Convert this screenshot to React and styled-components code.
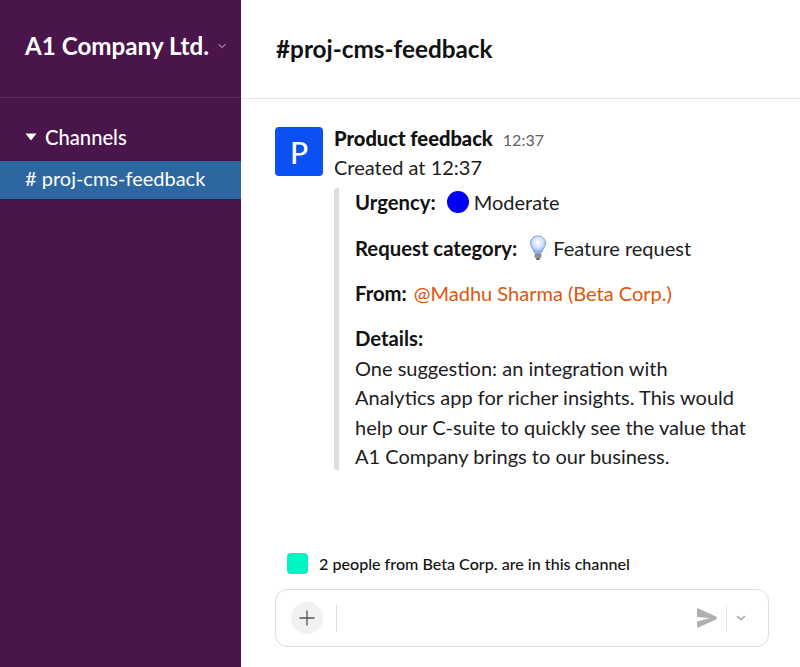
import styled, { createGlobalStyle } from 'styled-components';

const GlobalStyle = createGlobalStyle`
  html, body {
    margin: 0;
    padding: 0;
    height: 100%;
    background: #fff;
  }
  #root {
    height: 100%;
  }
`;

const App = () => {
  return (
    <>
      <GlobalStyle />
      <Root>
        <Sidebar>
          <Workspace>
            <WorkspaceName>A1 Company Ltd.</WorkspaceName>
            <svg width="10" height="6" viewBox="0 0 10 6" fill="none">
              <path d="M1.5 1.2 5 4.4l3.5-3.2" stroke="#9a7f9b" strokeWidth="1.3" />
            </svg>
          </Workspace>
          <SectionTitle>
            <svg width="12" height="8" viewBox="0 0 12 8">
              <path d="M0.5 0.5h11L6 7.5z" fill="#fff" />
            </svg>
            Channels
          </SectionTitle>
          <ChannelRow># proj-cms-feedback</ChannelRow>
        </Sidebar>
        <Main>
          <Header>#proj-cms-feedback</Header>
          <Feed>
            <Message>
              <Avatar>P</Avatar>
              <Body>
                <MessageHead>
                  <Sender>Product feedback</Sender>
                  <Time>12:37</Time>
                </MessageHead>
                <Line>Created at 12:37</Line>
                <Attachment>
                  <Field>
                    <Label>Urgency:</Label>
                    <BlueDot />
                    Moderate
                  </Field>
                  <Field>
                    <Label>Request category:</Label>
                    <svg width="20" height="26" viewBox="0 0 20 26">
                      <defs>
                        <radialGradient id="bulb" cx="50%" cy="40%" r="60%">
                          <stop offset="0" stopColor="#ffffff" />
                          <stop offset="0.6" stopColor="#cfe0ff" />
                          <stop offset="1" stopColor="#7fa6f2" />
                        </radialGradient>
                      </defs>
                      <path
                        d="M10 1C5.4 1 2.5 4.3 2.5 8.2c0 3.4 2.6 5.2 3.6 9h7.8c1-3.8 3.6-5.6 3.6-9C17.5 4.3 14.6 1 10 1z"
                        fill="url(#bulb)"
                        stroke="#7d9fe6"
                        strokeWidth="1"
                      />
                      <rect x="6.5" y="18" width="7" height="5" rx="1.5" fill="#8a8f99" />
                      <rect x="8" y="23" width="4" height="2" rx="1" fill="#5e636c" />
                    </svg>
                    Feature request
                  </Field>
                  <Field>
                    <Label>From:</Label>
                    <Mention>@Madhu Sharma (Beta Corp.)</Mention>
                  </Field>
                  <Details>
                    <Label>Details:</Label>
                    <br />
                    One suggestion: an integration with
                    <br />
                    Analytics app for richer insights. This would
                    <br />
                    help our C-suite to quickly see the value that
                    <br />
                    A1 Company brings to our business.
                  </Details>
                </Attachment>
              </Body>
            </Message>
          </Feed>
          <Notice>
            <NoticeSwatch />
            2 people from Beta Corp. are in this channel
          </Notice>
          <Composer>
            <PlusButton>
              <svg width="16" height="16" viewBox="0 0 16 16">
                <path d="M8 0.5v15M0.5 8h15" stroke="#555" strokeWidth="1.3" />
              </svg>
            </PlusButton>
            <Divider />
            <ComposerSpace />
            <svg width="20" height="20" viewBox="0 0 20 20">
              <path
                d="M1.5 0.4 19 8.6c1.3.6 1.3 2.2 0 2.800L1.5 19.600C.7 20 0 19.400 0 18.600v-5.100L13 10 0 9V1.400C0 .6.7 0 1.500.4z"
                fill="#b0b0b0"
              />
            </svg>
            <SendDivider />
            <svg width="10" height="6" viewBox="0 0 10 6" fill="none">
              <path d="M1 1l4 3.6L9 1" stroke="#a0a0a0" strokeWidth="1.4" />
            </svg>
          </Composer>
        </Main>
      </Root>
    </>
  );
};

export default App;

const Root = styled.div`
  width: 800px;
  height: 667px;
  display: flex;
  overflow: hidden;
  font-family: Lato, 'Liberation Sans', sans-serif;
  color: #1d1c1d;
`;

const Sidebar = styled.aside`
  width: 241px;
  flex-shrink: 0;
  background: #4a154b;
  color: #fff;
`;

const Workspace = styled.div`
  height: 98px;
  box-sizing: border-box;
  border-bottom: 1px solid #5a2e5b;
  padding: 0 14px 6px 25px;
  display: flex;
  align-items: center;
  gap: 8px;
`;

const WorkspaceName = styled.div`
  font-size: 24.2px;
  font-weight: 700;
  white-space: nowrap;
`;

const SectionTitle = styled.div`
  height: 24px;
  margin-top: 27px;
  padding-left: 25px;
  display: flex;
  align-items: center;
  gap: 8px;
  font-size: 20.2px;
  font-weight: 500;
`;

const ChannelRow = styled.div`
  height: 38px;
  box-sizing: border-box;
  margin-top: 12px;
  padding: 0 0 4px 25px;
  display: flex;
  align-items: center;
  background: #2c67a1;
  font-size: 20px;
  white-space: nowrap;
`;

const Main = styled.main`
  flex: 1;
  min-width: 0;
  display: flex;
  flex-direction: column;
`;

const Header = styled.header`
  height: 99px;
  box-sizing: border-box;
  border-bottom: 1px solid #e2e2e2;
  padding: 0 0 2px 35px;
  display: flex;
  align-items: center;
  font-size: 24.3px;
  font-weight: 700;
  color: #111;
`;

const Feed = styled.div`
  flex: 1;
  padding: 28px 0 0 34px;
`;

const Message = styled.div`
  display: flex;
  gap: 11px;
`;

const Avatar = styled.div`
  width: 48px;
  height: 49px;
  flex-shrink: 0;
  border-radius: 4px;
  background: #0a50f2;
  color: #fff;
  display: flex;
  align-items: center;
  justify-content: center;
  font-size: 30px;
  font-weight: 500;
`;

const Body = styled.div`
  min-width: 0;
  margin-top: -1px;
`;

const MessageHead = styled.div`
  display: flex;
  align-items: baseline;
  gap: 10px;
  height: 27px;
`;

const Sender = styled.div`
  font-size: 20.1px;
  font-weight: 900;
  color: #111;
`;

const Time = styled.div`
  font-size: 16px;
  color: #616061;
`;

const Line = styled.div`
  font-size: 20px;
  line-height: 28px;
`;

const Attachment = styled.div`
  margin-top: 7px;
  border-left: 5px solid #dddddd;
  border-radius: 3px;
  padding-left: 16px;
  height: 282px;
  font-size: 20px;
`;

const Field = styled.div`
  height: 28px;
  margin-bottom: 17.5px;
  display: flex;
  align-items: center;
  gap: 5px;
  white-space: nowrap;
`;

const Label = styled.span`
  font-size: 20.3px;
  font-weight: 700;
  color: #111;
  margin-right: 6px;
`;

const BlueDot = styled.span`
  width: 22px;
  height: 22px;
  border-radius: 50%;
  background: #0000f5;
`;

const Mention = styled.span`
  margin-left: -4px;
  color: #e0560a;
`;

const Details = styled.div`
  margin-top: -0.5px;
  line-height: 29.5px;
  white-space: nowrap;
`;

const Notice = styled.div`
  display: flex;
  align-items: center;
  gap: 11px;
  height: 22px;
  margin-top: -2px;
  padding-left: 46px;
  font-size: 16.1px;
  font-weight: 500;
  color: #111;
`;

const NoticeSwatch = styled.span`
  width: 21px;
  height: 21px;
  border-radius: 4px;
  background: #00f5c4;
`;

const Composer = styled.div`
  margin: 15px 31px 20px 34px;
  height: 58px;
  box-sizing: border-box;
  border: 1px solid #dddddd;
  border-radius: 12px;
  padding: 0 22px 0 15px;
  display: flex;
  align-items: center;
`;

const PlusButton = styled.div`
  width: 32px;
  height: 32px;
  border-radius: 50%;
  background: #f1f1f1;
  display: flex;
  align-items: center;
  justify-content: center;
`;

const Divider = styled.div`
  width: 1px;
  height: 27px;
  background: #dddddd;
  margin-left: 13px;
`;

const ComposerSpace = styled.div`
  flex: 1;
`;

const SendDivider = styled.div`
  width: 1px;
  height: 27px;
  background: #e8e8e8;
  margin: 0 9px 0 9px;
`;
